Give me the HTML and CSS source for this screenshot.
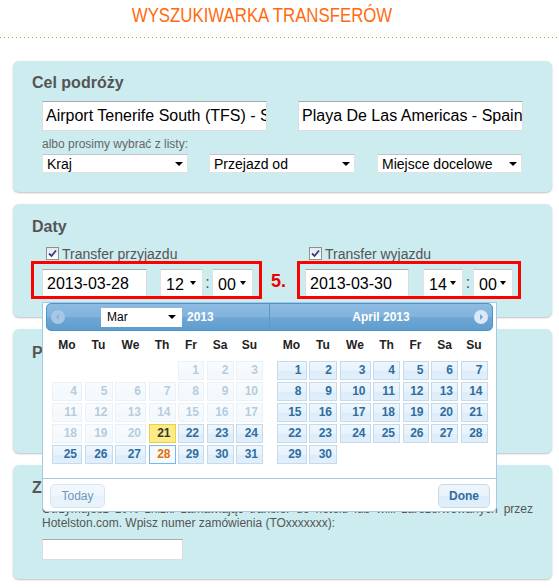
FILE: index.html
```html
<!DOCTYPE html>
<html lang="pl">
<head>
    <meta charset="UTF-8">
    <meta name="viewport" content="width=device-width, initial-scale=1.0">
    <title>Wyszukiwarka transferów</title>
    <link rel="stylesheet" href="styles.css">
</head>
<body>
    <h1 class="title"><span>WYSZUKIWARKA TRANSFERÓW</span></h1>
    <div class="dots"></div>

    <!-- cel podrozy -->
    <div class="box box-dest">
        <h2>Cel podróży</h2>
        <div class="box-body">
            <div class="route">
                <input class="text-in" type="text" value="Airport Tenerife South (TFS) - Spain">
                <input class="text-in" type="text" value="Playa De Las Americas - Spain">
            </div>
            <div class="hint">albo prosimy wybrać z listy:</div>
            <div class="lists">
                <div class="sel sel-list"><select><option>Kraj</option></select></div>
                <div class="sel sel-list"><select><option>Przejazd od</option></select></div>
                <div class="sel sel-list sel-last"><select><option>Miejsce docelowe</option></select></div>
            </div>
        </div>
    </div>

    <!-- daty -->
    <div class="box box-dates">
        <h2>Daty</h2>
        <div class="dates-row">
            <div class="date-col col-in">
                <div class="check-row">
                    <span class="check"><svg width="11" height="11" viewBox="0 0 11 11"><path d="M2 5.5 L4.5 8 L9 2.5" fill="none" stroke="#2b3f86" stroke-width="1.8"/></svg></span>
                    <span>Transfer przyjazdu</span>
                </div>
                <div class="redbox">
                    <input class="date-in" type="text" value="2013-03-28">
                    <div class="sel sel-time"><select><option>12</option></select></div>
                    <span class="colon">:</span>
                    <div class="sel sel-time sel-min"><select><option>00</option></select></div>
                </div>
            </div>
            <div class="step">5.</div>
            <div class="date-col col-out">
                <div class="check-row">
                    <span class="check"><svg width="11" height="11" viewBox="0 0 11 11"><path d="M2 5.5 L4.5 8 L9 2.5" fill="none" stroke="#2b3f86" stroke-width="1.8"/></svg></span>
                    <span>Transfer wyjazdu</span>
                </div>
                <div class="redbox">
                    <input class="date-in" type="text" value="2013-03-30">
                    <div class="sel sel-time"><select><option>14</option></select></div>
                    <span class="colon">:</span>
                    <div class="sel sel-time sel-min"><select><option>00</option></select></div>
                </div>
            </div>
        </div>

        <!-- kalendarz -->
        <div class="datepicker">
            <div class="dp-head">
                <div class="dp-title dp-title-left">
                    <span class="dp-arrow dp-prev"><svg width="14" height="14" viewBox="0 0 14 14"><circle cx="7" cy="7" r="7" fill="#a6c7e5"/><path d="M8 4 L5 7 L8 10 Z" fill="#86b4dc"/></svg></span>
                    <div class="sel sel-month"><select><option>Mar</option></select></div>
                    <span class="dp-year">2013</span>
                </div>
                <div class="dp-title dp-title-right">
                    <span></span>
                    <span class="dp-month">April 2013</span>
                    <span class="dp-arrow dp-next"><svg width="14" height="14" viewBox="0 0 14 14"><circle cx="7" cy="7" r="7" fill="#dbe8f5"/><path d="M6 4 L9 7 L6 10 Z" fill="#6fa6d4"/></svg></span>
                </div>
            </div>
            <div class="dp-body">
                <div class="dp-group">
                    <div class="dp-names">
                        <span>Mo</span><span>Tu</span><span>We</span><span>Th</span><span>Fr</span><span>Sa</span><span>Su</span>
                    </div>
                    <div class="dp-days">
                        <span></span><span></span><span></span><span></span>
                        <a class="off">1</a><a class="off">2</a><a class="off">3</a>
                        <a class="off">4</a><a class="off">5</a><a class="off">6</a><a class="off">7</a><a class="off">8</a><a class="off">9</a><a class="off">10</a>
                        <a class="off">11</a><a class="off">12</a><a class="off">13</a><a class="off">14</a><a class="off">15</a><a class="off">16</a><a class="off">17</a>
                        <a class="off">18</a><a class="off">19</a><a class="off">20</a><a class="today">21</a><a>22</a><a>23</a><a>24</a>
                        <a>25</a><a>26</a><a>27</a><a class="active">28</a><a>29</a><a>30</a><a>31</a>
                    </div>
                </div>
                <div class="dp-group dp-group-right">
                    <div class="dp-names">
                        <span>Mo</span><span>Tu</span><span>We</span><span>Th</span><span>Fr</span><span>Sa</span><span>Su</span>
                    </div>
                    <div class="dp-days">
                        <a>1</a><a>2</a><a>3</a><a>4</a><a>5</a><a>6</a><a>7</a>
                        <a>8</a><a>9</a><a>10</a><a>11</a><a>12</a><a>13</a><a>14</a>
                        <a>15</a><a>16</a><a>17</a><a>18</a><a>19</a><a>20</a><a>21</a>
                        <a>22</a><a>23</a><a>24</a><a>25</a><a>26</a><a>27</a><a>28</a>
                        <a>29</a><a>30</a>
                    </div>
                </div>
            </div>
            <div class="dp-buttons">
                <button class="dp-btn dp-today">Today</button>
                <button class="dp-btn dp-done">Done</button>
            </div>
        </div>
    </div>

    <!-- pasazerowie -->
    <div class="box box-pax">
        <h2>Pasażerowie</h2>
    </div>

    <!-- znizka -->
    <div class="box box-disc">
        <h2>Zniżka</h2>
        <p class="disc-text">Otrzymujesz 10% zniżki zamawiając transfer do hotelu lub willi zarezerwowanych przez Hotelston.com. Wpisz numer zamówienia (TOxxxxxxx):</p>
        <div class="box-body">
            <input class="code-in" type="text">
        </div>
    </div>
</body>
</html>
```

FILE: styles.css
```css
body {
    margin: 0;
    width: 559px;
    font-family: 'Liberation Sans', Arial, sans-serif;
    background-color: white;
    color: #555;
}
.title {
    margin: 0;
    padding: 4px 35px 0 0;
    text-align: center;
    font-size: 20px;
    line-height: 22px;
    font-weight: normal;
    color: #ff6a10;
}
.title span {
    display: inline-block;
    transform: scaleX(0.84);
}
.dots {
    height: 1px;
    margin: 11px 0 23px;
    background: repeating-linear-gradient(to right, #97b73a 0 1px, transparent 1px 4px);
}
.box {
    margin: 0 7px 12px 13px;
    padding: 13px 19px 19px 19px;
    background-color: #cdecf0;
    border-radius: 6px;
    box-shadow: 0 1px 2px rgba(0,0,0,0.25);
}
.box h2 {
    margin: 0 0 9px;
    font-size: 16px;
    line-height: 18px;
    font-weight: bold;
    color: #555;
}
.box-body {
    padding-left: 10px;
}
.route {
    display: flex;
    gap: 31px;
}
.text-in, .date-in, .code-in {
    box-sizing: border-box;
    border: 1px solid #dcdcdc;
    border-top-color: #a9a9a9;
    background: white;
    font-family: 'Liberation Sans', Arial, sans-serif;
    font-size: 16px;
    color: #000;
    padding: 0 0 0 3px;
    margin: 0;
    outline: none;
}
.text-in {
    width: 225px;
    height: 30px;
}
.hint {
    margin-top: 6px;
    font-size: 12px;
    line-height: 14px;
    color: #666;
}
.lists {
    display: flex;
    gap: 21px;
    margin-top: 3px;
}
.sel {
    position: relative;
    box-sizing: border-box;
    background: white;
    border: 1px solid #e2e2e2;
    border-top-color: #c4c4c4;
}
.sel select {
    appearance: none;
    -webkit-appearance: none;
    display: block;
    width: 100%;
    height: 100%;
    border: none;
    background: transparent;
    font-family: 'Liberation Sans', Arial, sans-serif;
    color: #000;
    padding: 0 0 0 4px;
    margin: 0;
    outline: none;
}
.sel::after {
    content: '';
    position: absolute;
    top: 50%;
    right: 4px;
    margin-top: -2px;
    border-left: 4px solid transparent;
    border-right: 4px solid transparent;
    border-top: 4px solid #000;
}
.sel-list {
    width: 146px;
    height: 19px;
}
.sel-list select {
    font-size: 14px;
}
.sel-last {
    width: 145px;
    margin-left: 1px;
}
.box-dates {
    position: relative;
    padding-top: 14px;
    padding-bottom: 18px;
}
.dates-row {
    display: flex;
    margin-left: -1px;
}
.check-row {
    display: flex;
    height: 14px;
    overflow: hidden;
    margin-top: 2px;
    font-size: 14px;
    line-height: 15px;
    color: #555;
}
.check {
    box-sizing: border-box;
    width: 13px;
    height: 13px;
    margin-right: 3px;
    border: 1px solid #8e8f8f;
    background: linear-gradient(#e8e8e8, #fff);
}
.check svg {
    display: block;
}
.col-in {
    width: 231px;
}
.col-in .check-row {
    padding-left: 15px;
}
.col-out {
    width: 224px;
}
.col-out .check-row {
    padding-left: 12px;
}
.redbox {
    position: relative;
    display: flex;
    align-items: flex-start;
    box-sizing: border-box;
    height: 38px;
    padding: 5px 0 0 8px;
    border: 3px solid #f00;
    overflow: hidden;
}
.col-out .redbox {
    padding-left: 5px;
}
.date-in {
    width: 105px;
    height: 30px;
    flex: none;
    padding-left: 4px;
}
.col-out .date-in {
    width: 104px;
}
.sel-time {
    width: 43px;
    height: 30px;
    margin-left: 13px;
    flex: none;
}
.sel-time select {
    font-size: 16px;
    padding-left: 5px;
}
.sel-time::after {
    margin-top: -3px;
    right: 6px;
    border-left-width: 3px;
    border-right-width: 3px;
}
.sel-min {
    width: 41px;
    margin-left: 0;
}
.col-out .sel-time {
    width: 40px;
    margin-left: 14px;
}
.col-out .sel-min {
    margin-left: 0;
}
.colon {
    width: 9px;
    text-align: center;
    font-size: 16px;
    line-height: 28px;
    color: #555;
}
.col-out .colon {
    width: 10px;
}
.step {
    width: 26px;
    padding-left: 9px;
    margin-top: 26px;
    font-size: 18px;
    line-height: 20px;
    font-weight: bold;
    color: #ee0000;
}

/* kalendarz */
.datepicker {
    position: absolute;
    left: 29px;
    top: 98px;
    z-index: 10;
    box-sizing: border-box;
    width: 455px;
    height: 210px;
    padding: 0 3px 3px;
    border: 1px solid #a6c9e2;
    border-radius: 0 0 5px 5px;
    background: white;
    font-size: 12px;
    color: #222;
}
.dp-head {
    display: flex;
    box-sizing: border-box;
    height: 28px;
    border: 1px solid #4a94cf;
    border-radius: 5px;
    background: linear-gradient(#8dbbe1 0%, #82b3dc 50%, #6fa7d5 51%, #5f9dcd 100%);
    color: white;
    font-weight: bold;
}
.dp-title {
    display: flex;
    align-items: center;
}
.dp-title-left {
    width: 222px;
}
.dp-title-right {
    flex: 1;
    display: grid;
    grid-template-columns: 18px 1fr 18px;
    border-left: 1px solid #5a98cb;
}
.dp-arrow svg {
    display: block;
}
.dp-prev {
    margin-left: 4px;
}
.dp-next {
    justify-self: end;
    margin-right: 4px;
}
.sel-month {
    width: 81px;
    height: 19px;
    margin-left: 36px;
    border-color: #fff;
}
.sel-month select {
    font-size: 12px;
    padding-left: 5px;
}
.sel-month::after {
    right: 5px;
}
.dp-year {
    margin-left: 5px;
}
.dp-month {
    text-align: center;
}
.dp-body {
    display: flex;
}
.dp-group {
    width: 224px;
    padding: 6px 0 0 6px;
    box-sizing: border-box;
}
.dp-group-right {
    padding-left: 7px;
}
.dp-names, .dp-days {
    display: grid;
    grid-template-columns: 30px 28px 31px 27px 26px 27px 27px;
    column-gap: 2.5px;
}
.dp-names span {
    text-align: center;
    font-weight: bold;
    line-height: 16px;
}
.dp-days {
    row-gap: 2px;
    margin-top: 8px;
}
.dp-days a {
    display: block;
    box-sizing: border-box;
    height: 19px;
    padding-right: 4px;
    border: 1px solid #c5dbec;
    background: linear-gradient(#eef6fd 0%, #e7f2fc 50%, #dcecfa 51%, #e2effb 100%);
    color: #2e6e9e;
    font-weight: bold;
    line-height: 17px;
    text-align: right;
    text-decoration: none;
}
.dp-days a.off {
    opacity: 0.35;
}
.dp-days a.today {
    border-color: #f0cf3a;
    background: #fbec88;
    color: #363636;
}
.dp-days a.active {
    border-color: #79b7e7;
    background: #f7fafc;
    color: #e17009;
}
.dp-buttons {
    display: flex;
    justify-content: space-between;
    margin: 14px -3px 0;
    padding: 5px 6px 0 7px;
    border-top: 1px solid #a6c9e2;
}
.dp-btn {
    box-sizing: border-box;
    height: 24px;
    border: 1px solid #c5dbec;
    border-radius: 5px;
    background: linear-gradient(#eef6fd 0%, #e7f2fc 50%, #dcecfa 51%, #e2effb 100%);
    font-family: 'Liberation Sans', Arial, sans-serif;
    font-size: 12px;
    color: #2e6e9e;
    padding: 0;
}
.dp-today {
    width: 55px;
    opacity: 0.7;
}
.dp-done {
    width: 52px;
    font-weight: bold;
}

.box-pax {
    box-sizing: border-box;
    height: 124px;
    padding-top: 15px;
}
.box-disc {
    padding-top: 14px;
}
.box-disc h2 {
    margin-bottom: 5px;
}
.disc-text {
    margin: 0;
    padding-left: 10px;
    font-size: 12px;
    line-height: 14px;
    text-align: justify;
    color: #555;
}
.box-disc .box-body {
    margin-top: 9px;
}
.code-in {
    display: block;
    width: 141px;
    height: 21px;
}
```
